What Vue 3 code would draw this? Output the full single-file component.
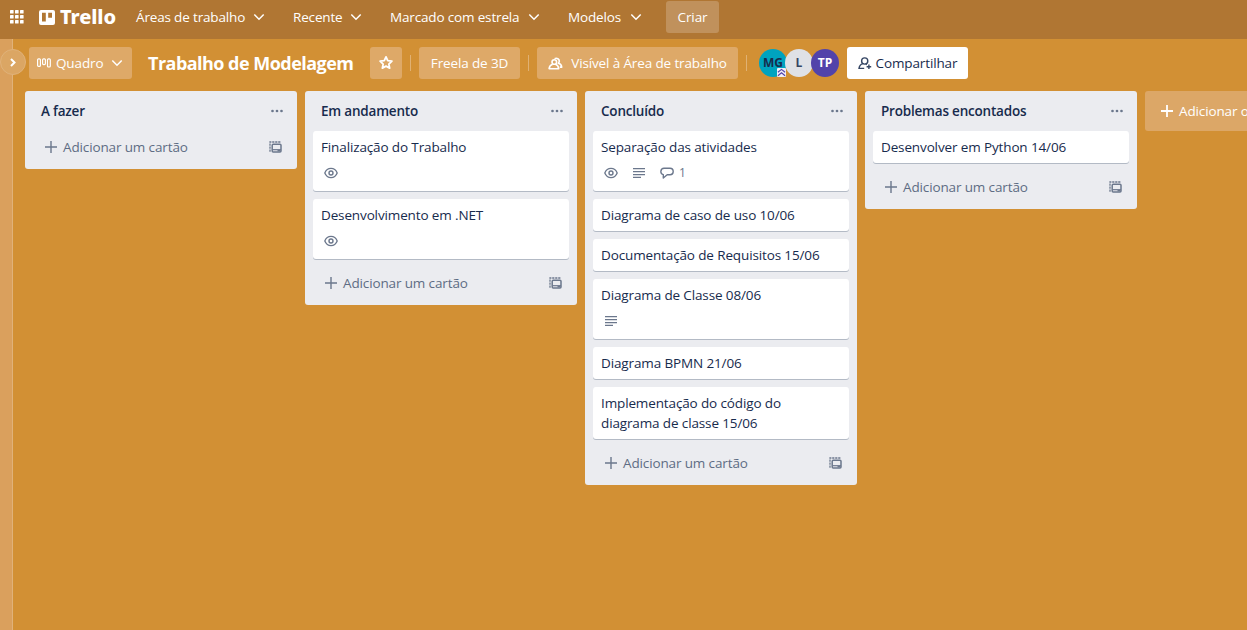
<script setup>
const menus = [
  { label: 'Áreas de trabalho', cls: 'm-areas' },
  { label: 'Recente', cls: 'm-recent' },
  { label: 'Marcado com estrela', cls: 'm-star' },
  { label: 'Modelos', cls: 'm-models' }
]
const lists = [
  { title: 'A fazer', cards: [] },
  {
    title: 'Em andamento',
    cards: [
      { title: 'Finalização do Trabalho', watch: true },
      { title: 'Desenvolvimento em .NET', watch: true }
    ]
  },
  {
    title: 'Concluído',
    cards: [
      { title: 'Separação das atividades', watch: true, desc: true, comments: 1 },
      { title: 'Diagrama de caso de uso 10/06' },
      { title: 'Documentação de Requisitos 15/06' },
      { title: 'Diagrama de Classe 08/06', desc: true },
      { title: 'Diagrama BPMN 21/06' },
      { title: 'Implementação do código do diagrama de classe 15/06' }
    ]
  },
  { title: 'Problemas encontados', cards: [{ title: 'Desenvolver em Python 14/06' }] }
]
</script>

<template>
  <div class="app">
    <header class="topbar">
      <svg class="apps" width="14" height="14" viewBox="0 0 14 14" fill="#fff">
        <template v-for="r in 3" :key="r">
          <rect v-for="c in 3" :key="c" :x="(c - 1) * 5" :y="(r - 1) * 5" width="3.6" height="3.6" rx=".6" />
        </template>
      </svg>
      <div class="logo">
        <svg width="16" height="15" viewBox="0 0 16 15">
          <path fill="#fff" fill-rule="evenodd" d="M2 0h12a2 2 0 0 1 2 2v11a2 2 0 0 1-2 2H2a2 2 0 0 1-2-2V2a2 2 0 0 1 2-2zM3 2.7v8.8h3.8V2.7zM9.2 2.7v5h3.8v-5z" />
        </svg>
        <span>Trello</span>
      </div>
      <nav class="menus">
        <div v-for="m in menus" :key="m.label" class="menu" :class="m.cls">
          <span>{{ m.label }}</span>
          <svg width="12" height="8" viewBox="0 0 12 8"><path d="M1.3 1.5 6 6.2l4.7-4.7" /></svg>
        </div>
      </nav>
      <button class="create">Criar</button>
    </header>

    <div class="main">
      <aside class="drawer">
        <div class="toggle">
          <svg width="6" height="9" viewBox="0 0 6 9"><path d="M1 1l3.5 3.5L1 8" /></svg>
        </div>
      </aside>
      <section class="board">
        <div class="boardbar">
          <button class="btn view">
            <svg width="14" height="10" viewBox="0 0 14 10" fill="none" stroke="#fff" stroke-width="1.2">
              <rect x=".6" y=".8" width="2.8" height="7.6" rx="1" />
              <rect x="5.600" y=".8" width="2.800" height="5.800" rx="1" />
              <rect x="10.500" y=".8" width="2.800" height="8.200" rx="1" />
            </svg>
            <span>Quadro</span>
            <svg class="chev" width="12" height="8" viewBox="0 0 12 8"><path d="M1.3 1.5 6 6.2l4.7-4.7" /></svg>
          </button>
          <h1>Trabalho de Modelagem</h1>
          <button class="btn star">
            <svg width="16" height="16" viewBox="0 0 16 16">
              <path d="M8 1.9l1.75 3.8 4.15.5-3.05 2.85.8 4.1L8 11.1l-3.65 2.05.8-4.1L2.1 6.2l4.15-.5z" fill="none" stroke="#fff" stroke-width="1.8" stroke-linejoin="round" />
            </svg>
          </button>
          <i class="divider"></i>
          <button class="btn freela">Freela de 3D</button>
          <i class="divider"></i>
          <button class="btn visible">
            <svg width="15" height="13" viewBox="0 0 15 13" fill="none" stroke="#fff" stroke-width="1.6" stroke-linejoin="round">
              <circle cx="6.300" cy="5" r="2.300" />
              <path d="M4.700 7.200C2.700 7.700 1.400 9 1.100 11.700h9.600c-.3-2.700-1.400-4-3.300-4.500" />
              <path d="M6.600 1.700c2-1.300 5.200.3 4.600 3-.1.700-.4 1.200-.9 1.600 2 .5 3.200 1.800 3.400 3.800h-1.900" />
            </svg>
            <span>Visível à Área de trabalho</span>
          </button>
          <i class="divider"></i>
          <div class="avatars">
            <div class="avatar mg">MG
              <svg class="admin" width="9" height="9" viewBox="0 0 9 9">
                <rect width="9" height="9" rx="1" fill="#f0eef8" />
                <path d="M.9 4.3 4.5 1.4l3.6 2.9M.9 7.7l3.6-2.9 3.6 2.9" fill="none" stroke="#5243aa" stroke-width="1.2" />
              </svg>
            </div>
            <div class="avatar l">L</div>
            <div class="avatar tp">TP</div>
          </div>
          <button class="share">
            <svg width="14" height="13" viewBox="0 0 14 13" fill="none" stroke="#344563" stroke-width="1.4">
              <circle cx="6.700" cy="4" r="3.100" />
              <path d="M4.900 6.700C2.700 7.400 1.300 8.800 1 11.400h5.200M7.800 7.100l1 .6M10.900 7.400v4.600M8.600 9.700h4.600" />
            </svg>
            <span>Compartilhar</span>
          </button>
        </div>

        <div class="lists">
          <div v-for="list in lists" :key="list.title" class="list">
            <div class="list-head">
              <h2>{{ list.title }}</h2>
              <svg width="12" height="4" viewBox="0 0 12 4" fill="#6b778c">
                <circle cx="1.5" cy="2" r="1.35" /><circle cx="6" cy="2" r="1.35" /><circle cx="10.5" cy="2" r="1.35" />
              </svg>
            </div>
            <div v-for="card in list.cards" :key="card.title" class="card">
              <div class="card-title">{{ card.title }}</div>
              <div v-if="card.watch || card.desc" class="badges">
                <svg v-if="card.watch" width="14" height="12" viewBox="0 0 14 12" fill="none" stroke="#6b778c">
                  <path d="M.8 6C2 3 4.200 1.400 7 1.400S12 3 13.200 6C12 9 9.800 10.600 7 10.600S2 9 .8 6z" stroke-width="1.300" />
                  <circle cx="7" cy="6" r="2" stroke-width="1.400" />
                </svg>
                <svg v-if="card.desc" width="14" height="12" viewBox="0 0 14 12" stroke="#6b778c" stroke-width="1.400">
                  <path d="M1 1.600h12M1 4.600h12M1 7.600h12M1 10.400h8" />
                </svg>
                <template v-if="card.comments">
                  <svg width="14" height="12" viewBox="0 0 14 12" fill="none" stroke="#6b778c" stroke-width="1.400" stroke-linejoin="round">
                    <path d="M4 1.300h6a3.200 3.200 0 0 1 0 6.400H7.200L3.300 11V7.600A3.200 3.200 0 0 1 4 1.300z" />
                  </svg>
                  <span class="count">{{ card.comments }}</span>
                </template>
              </div>
            </div>
            <div class="list-foot">
              <svg width="12" height="12" viewBox="0 0 12 12"><path d="M6 0v12M0 6h12" stroke="#6b778c" stroke-width="1.400" /></svg>
              <span>Adicionar um cartão</span>
              <svg class="template" width="13" height="12" viewBox="0 0 13 12" fill="none" stroke="#6b778c">
                <path d="M1 10.800V1h10.500" stroke-width="1.300" stroke-dasharray="2.200 .8" />
                <rect x="3.200" y="3.200" width="8.800" height="7.800" rx="1" stroke-width="1.500" />
                <path d="M3.500 8.700h8.500" stroke-width="1.200" />
                <path d="M8.500 9.700h3" stroke-width="1.400" />
              </svg>
            </div>
          </div>
          <div class="add-list">
            <svg width="12" height="12" viewBox="0 0 12 12"><path d="M6 0v12M0 6h12" stroke="#fff" stroke-width="1.800" /></svg>
            <span>Adicionar outra lista</span>
          </div>
        </div>
      </section>
    </div>
  </div>
</template>

<style>
html, body { margin: 0; overflow: hidden; }
</style>

<style scoped>
* { box-sizing: border-box; }
.app {
  width: 1247px; height: 630px; overflow: hidden;
  display: flex; flex-direction: column;
  background: #d29034; color: #172b4d;
  font: 13.5px/20px "Open Sans", "Noto Sans", sans-serif;
  letter-spacing: -.13px;
  white-space: nowrap;
}
svg { flex: none; display: block; }
button { border: 0; padding: 0; margin: 0; font: inherit; color: inherit; letter-spacing: inherit; white-space: nowrap; }
.topbar { height: 39px; flex: none; background: #b07633; color: #fff; display: flex; align-items: flex-start; padding: 1px 0 0 10px; }
.apps { margin-top: 9px; }
.logo { display: flex; align-items: center; height: 32px; width: 97px; margin-left: 15px; gap: 5px; }
.logo span { font: 800 20px/34px "Noto Sans", sans-serif; letter-spacing: -.1px; }
.menus { display: flex; }
.menu { display: flex; align-items: center; justify-content: space-between; height: 32px; font-weight: 500; letter-spacing: -.16px; }
.menu path, .chev path { fill: none; stroke: #fff; stroke-width: 1.5; }
.m-areas { width: 129px; margin-right: 28px; }
.m-recent { width: 69px; margin-right: 28px; }
.m-star { width: 150px; margin-right: 28px; }
.m-models { width: 74px; margin-right: 24px; }
.create { width: 53px; height: 32px; border-radius: 3px; background: #c0915c; font-weight: 500; }
.main { flex: 1; display: flex; min-height: 0; }
.drawer { width: 13px; flex: none; background: #daa05d; border-right: 1px solid #e0b27a; position: relative; }
.toggle { position: absolute; left: 0; top: 10px; width: 26px; height: 26px; border-radius: 50%; background: #dba664; border: 1px solid #e0b27a; display: flex; align-items: center; justify-content: center; }
.toggle path { fill: none; stroke: #fff; stroke-width: 2; }
.board { flex: 1; min-width: 0; }
.boardbar { height: 52px; display: flex; align-items: center; padding: 0 0 4px 16px; color: #fff; }
.btn { height: 32px; border-radius: 3px; background: #dea968; display: flex; align-items: center; justify-content: center; }
.view { width: 103px; justify-content: flex-start; padding-left: 8px; }
.view span { width: 47px; margin: 0 8px 0 5px; text-align: left; }
h1 { margin: 0 0 0 16px; width: 222px; font-size: 18px; line-height: 32px; font-weight: 700; letter-spacing: -.53px; }
.star { width: 32px; }
.divider { width: 1px; height: 16px; background: #e0b173; margin: 0 8px; }
.freela { width: 101px; }
.visible { width: 201px; gap: 8px; }
.avatars { display: flex; margin-left: 4px; letter-spacing: 0; }
.avatar { position: relative; width: 28px; height: 28px; margin-right: -2px; border-radius: 50%; text-align: center; font: bold 12px/28px "Open Sans", sans-serif; }
.mg { background: #00a3bf; color: #172b4d; }
.l { background: #dfe1e6; color: #344563; }
.tp { background: #5243aa; color: #fff; }
.admin { position: absolute; right: 1px; bottom: 0; }
.share { margin-left: 10px; width: 121px; height: 32px; border-radius: 3px; background: #fff; color: #172b4d; display: flex; align-items: center; justify-content: center; gap: 4px; }
.lists { display: flex; align-items: flex-start; gap: 8px; padding-left: 12px; }
.list { width: 272px; flex: none; border-radius: 3px; background: #ebecf0; padding: 0 8px; }
.list-head { height: 40px; display: flex; align-items: center; justify-content: space-between; padding: 0 6px 0 8px; }
h2 { margin: 0; font-size: 13.5px; line-height: 20px; font-weight: 600; letter-spacing: -.2px; }
.card { background: #fff; border-radius: 3px; box-shadow: 0 1px 0 #b3bac5; padding: 6px 8px 2px; margin-bottom: 8px; }
.card-title { margin-bottom: 4px; white-space: normal; }
.badges { height: 28px; padding: 0 3px 4px; display: flex; align-items: center; gap: 14px; }
.count { font-size: 12px; color: #6b778c; margin-left: -9px; }
.list-foot { height: 38px; display: flex; align-items: center; padding: 0 7px 6px 12px; color: #5e6c84; }
.list-foot span { margin-left: 6px; }
.template { margin-left: auto; }
.add-list { flex: none; width: 272px; height: 40px; border-radius: 3px; background: #dca767; color: #fff; display: flex; align-items: center; padding-left: 16px; gap: 6px; font-weight: 500; }
</style>
